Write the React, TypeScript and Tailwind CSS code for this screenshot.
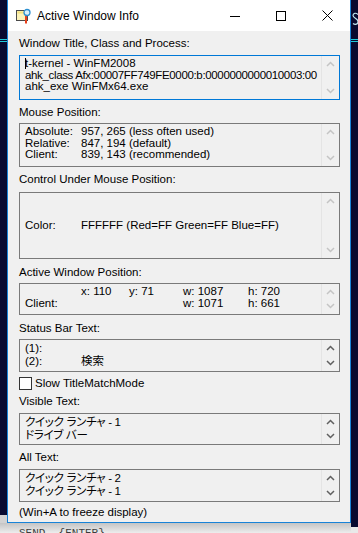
import React from "react";

const ui = "font-['Liberation_Sans','Noto_Sans_CJK_JP',sans-serif] text-[11.5px] text-black";
const jp = "[font-feature-settings:'palt'] tracking-[-0.3px]";

function Chevron({ up, on }: { up?: boolean; on?: boolean }) {
  return (
    <svg width="9" height="6" viewBox="0 0 9 6" fill="none">
      <path
        d={up ? "M1 5L4.5 1.5L8 5" : "M1 1L4.5 4.5L8 1"}
        stroke={on ? "#606060" : "#c4c4c4"}
        strokeWidth="1.5"
      />
    </svg>
  );
}

function Field({
  box,
  focused,
  on,
  center,
  lead = "leading-[11.5px]",
  children,
}: {
  box: string;
  focused?: boolean;
  on?: boolean;
  center?: boolean;
  lead?: string;
  children: React.ReactNode;
}) {
  return (
    <div className={`${box} flex border ${focused ? "border-[#0078d7]" : "border-[#7a7a7a]"}`}>
      <div
        className={`flex-1 min-w-0 overflow-hidden whitespace-nowrap pl-[5px] ${lead} ${
          center ? "flex flex-col justify-center" : "pt-[2px]"
        }`}
      >
        {children}
      </div>
      <div className="w-[18px] border-l border-[#e4e4e4] flex flex-col items-center justify-between py-[5px]">
        <Chevron up on={on} />
        <Chevron on={on} />
      </div>
    </div>
  );
}

function Label({ mt, children }: { mt: string; children: React.ReactNode }) {
  return <div className={`${mt} h-[14px] leading-[14px] whitespace-nowrap`}>{children}</div>;
}

function TitleIcon() {
  return (
    <svg width="16" height="16" viewBox="0 0 16 16">
      <rect x="0.5" y="2.5" width="11" height="10" fill="#fdf3b8" stroke="#4a4a4a" />
      <rect x="1.5" y="3.5" width="9" height="2" fill="#f6e27a" />
      <rect x="9" y="8" width="2" height="7.5" fill="#e8401c" />
      <circle cx="11" cy="4.5" r="3" fill="#d8f0fb" stroke="#2a8fd0" strokeWidth="1.3" />
    </svg>
  );
}

export default function App() {
  return (
    <div className="relative w-[358px] h-[533px] overflow-hidden bg-[#080a30]">
      {/* desktop behind the window */}
      <div className="absolute left-0 top-[39px] w-[7px] h-px bg-[#1fc8d8]"></div>
      <div className="absolute left-0 top-[41px] w-[7px] h-px bg-[#1fc8d8]"></div>
      <div className="absolute right-0 top-[39px] w-[7px] h-px bg-[#1fc8d8]"></div>
      <div className="absolute right-0 top-[41px] w-[7px] h-px bg-[#1fc8d8]"></div>
      <svg className="absolute left-[352px] top-[12px]" width="6" height="14" viewBox="0 0 6 14" fill="none">
        <path d="M6 2.5C4 0.5 1 1 1 3.5C1 6 6 6.5 6 9.5C6 12.5 3 13 1 11.5" stroke="#bfe6ef" strokeWidth="1.2" />
      </svg>
      <div className="absolute left-0 top-[515px] w-[7px] bottom-0 bg-[#d2d2d2]"></div>
      <div className="absolute left-0 right-[7px] top-[523px] bottom-0 bg-gradient-to-b from-[#c4c4c4] to-[#ededed]"></div>
      <div className="absolute right-0 w-[7px] top-[527px] bottom-0 bg-[#e9e9e9]"></div>
      <div className="absolute left-[19px] top-[527px] text-[11px] leading-[12px] text-[#3c3c3c] font-['Liberation_Mono',monospace] whitespace-pre">
        SEND  {"{ENTER}"}
      </div>

      {/* window */}
      <div className={`relative z-10 ml-[7px] w-[344px] h-[523px] flex flex-col border-x border-b border-[#1883d7] bg-[#f0f0f0] ${ui}`}>
        <div className="h-[31px] shrink-0 bg-white flex items-center">
          <div className="ml-[8px]">
            <TitleIcon />
          </div>
          <span className="ml-[5px] text-[12px] font-['Liberation_Sans',sans-serif]">Active Window Info</span>
          <div className="ml-auto flex">
            <div className="w-[46px] h-[31px] flex items-center justify-center">
              <svg width="10" height="10" viewBox="0 0 10 10">
                <path d="M0 5.5H10" stroke="#000" strokeWidth="1" />
              </svg>
            </div>
            <div className="w-[46px] h-[31px] flex items-center justify-center">
              <svg width="10" height="10" viewBox="0 0 10 10">
                <rect x="0.5" y="0.5" width="9" height="9" fill="none" stroke="#000" strokeWidth="1" />
              </svg>
            </div>
            <div className="w-[46px] h-[31px] flex items-center justify-center">
              <svg width="11" height="11" viewBox="0 0 11 11">
                <path d="M0.5 0.5L10.5 10.5M10.5 0.5L0.5 10.5" stroke="#000" strokeWidth="1" />
              </svg>
            </div>
          </div>
        </div>

        <div className="flex flex-col pl-[11px] pr-[10px]">
          <Label mt="mt-[5px]">Window Title, Class and Process:</Label>
          <Field box="mt-[5px] h-[45px]" focused>
            <div>
              <span className="inline-block w-px h-[11px] bg-black align-middle -mr-px"></span>t-kernel - WinFM2008
            </div>
            <div className="tracking-[-0.35px]">ahk_class Afx:00007FF749FE0000:b:0000000000010003:00</div>
            <div>ahk_exe WinFMx64.exe</div>
          </Field>

          <Label mt="mt-[5px]">Mouse Position:</Label>
          <Field box="mt-[4px] h-[44px]">
            <div className="flex">
              <span className="w-[56px] shrink-0">Absolute:</span>
              <span>957, 265 (less often used)</span>
            </div>
            <div className="flex">
              <span className="w-[56px] shrink-0">Relative:</span>
              <span>847, 194 (default)</span>
            </div>
            <div className="flex">
              <span className="w-[56px] shrink-0">Client:</span>
              <span>839, 143 (recommended)</span>
            </div>
          </Field>

          <Label mt="mt-[5px]">Control Under Mouse Position:</Label>
          <Field box="mt-[6px] h-[67px]" center>
            <div className="flex">
              <span className="w-[56px] shrink-0">Color:</span>
              <span>FFFFFF (Red=FF Green=FF Blue=FF)</span>
            </div>
          </Field>

          <Label mt="mt-[6px]">Active Window Position:</Label>
          <Field box="mt-[4px] h-[32px]">
            <div className="flex">
              <span className="w-[56px] shrink-0"></span>
              <span className="w-[48px] shrink-0">x: 110</span>
              <span className="w-[54px] shrink-0">y: 71</span>
              <span className="w-[65px] shrink-0">w: 1087</span>
              <span>h: 720</span>
            </div>
            <div className="flex">
              <span className="w-[158px] shrink-0">Client:</span>
              <span className="w-[65px] shrink-0">w: 1071</span>
              <span>h: 661</span>
            </div>
          </Field>

          <Label mt="mt-[6px]">Status Bar Text:</Label>
          <Field box="mt-[4px] h-[33px]" on lead="leading-[12.5px]">
            <div className="flex">
              <span className="w-[56px] shrink-0">(1):</span>
            </div>
            <div className="flex">
              <span className="w-[56px] shrink-0">(2):</span>
              <span>検索</span>
            </div>
          </Field>

          <div className="mt-[5px] h-[13px] flex items-center">
            <span className="w-[13px] h-[13px] shrink-0 border border-[#333] bg-white"></span>
            <span className="ml-[3px] leading-[13px] whitespace-nowrap">Slow TitleMatchMode</span>
          </div>

          <Label mt="mt-[4px]">Visible Text:</Label>
          <Field box="mt-[5px] h-[32px]" on lead="leading-[12.5px]">
            <div className={jp}>クイック ランチャ - 1</div>
            <div className={jp}>ドライブ バー</div>
          </Field>

          <Label mt="mt-[5px]">All Text:</Label>
          <Field box="mt-[5px] h-[33px]" on lead="leading-[12.5px]">
            <div className={jp}>クイック ランチャ - 2</div>
            <div className={jp}>クイック ランチャ - 1</div>
          </Field>

          <Label mt="mt-[3px]">(Win+A to freeze display)</Label>
        </div>
      </div>
    </div>
  );
}
